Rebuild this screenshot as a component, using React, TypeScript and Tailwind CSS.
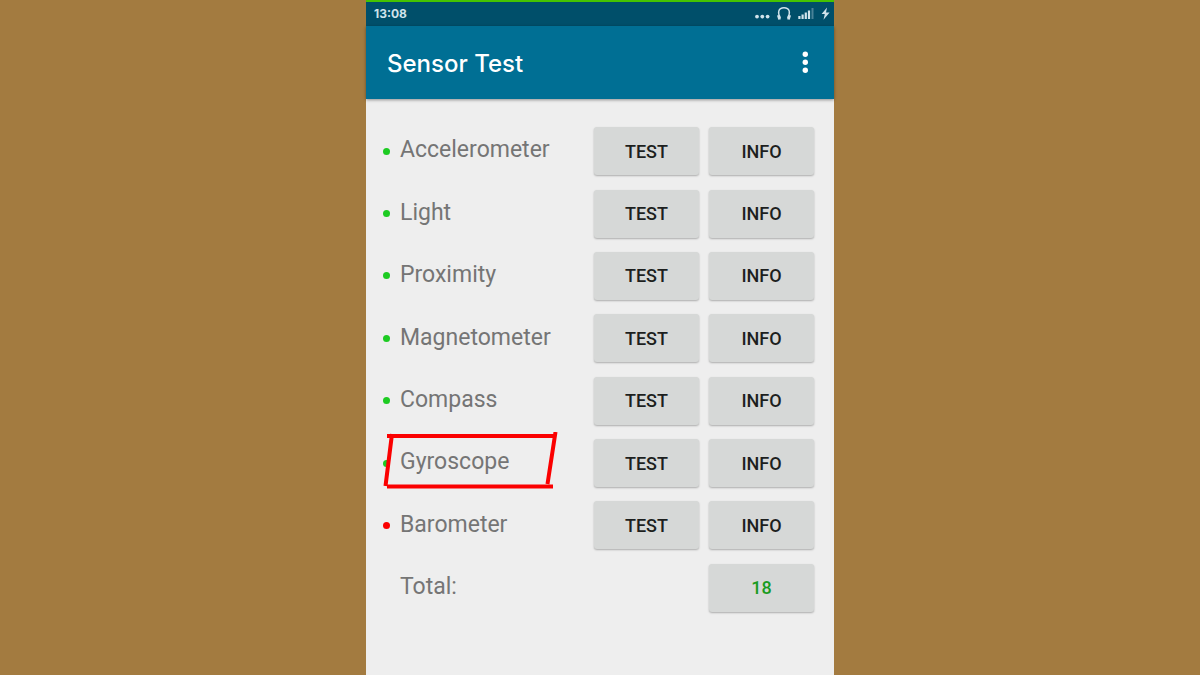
import { memo } from "react";

type Sensor = {
  name: string;
  available: boolean;
  marked?: boolean;
};

const SENSORS: Sensor[] = [
  { name: "Accelerometer", available: true },
  { name: "Light", available: true },
  { name: "Proximity", available: true },
  { name: "Magnetometer", available: true },
  { name: "Compass", available: true },
  { name: "Gyroscope", available: true, marked: true },
  { name: "Barometer", available: false },
];

const BUTTON =
  "h-12 w-[105px] shrink-0 rounded-[3px] bg-[#d6d8d7] pt-px text-lg font-medium shadow-[0_1px_2px_rgba(0,0,0,0.28)]";

function StatusBar() {
  return (
    <div className="flex h-[26px] items-center justify-between border-t-2 border-[#46c300] bg-[#004f6a] pr-1 pl-2 text-[#d0e3eb]">
      <time className="font-['Inter',sans-serif] text-xs leading-6 font-bold">13:08</time>
      <svg width="76" height="16" viewBox="0 0 76 16" fill="currentColor" aria-hidden="true">
        <circle cx="3" cy="10.6" r="1.9" />
        <circle cx="8.3" cy="10.6" r="1.9" />
        <circle cx="13.6" cy="10.6" r="1.9" />
        <path d="M26.4 12C23.2 7 24.2 1.8 30 1.8S36.800 7 33.600 12" fill="none" stroke="currentColor" strokeWidth="1.4" />
        <path d="M23 9.500l2.500-.6 1.400 4.300-2.600.6zM37 9.500l-2.500-.6-1.400 4.300 2.600.6z" />
        <path d="M44.300 10h2.200v3h-2.200zM47.500 8.500h2.200V13h-2.200zM50.700 6.500h2.200V13h-2.200zM53.900 4.500h2.200V13h-2.200z" />
        <path d="M57.500 2H59.500v11H57.500z" opacity=".35" />
        <path d="M73 1.500L67.600 8h3.200L69.500 13.800 75.600 6.600h-3.600z" />
      </svg>
    </div>
  );
}

function AppBar() {
  return (
    <header className="relative flex h-[73px] items-center justify-between bg-[#006f94] pr-[19px] pl-[21px] text-white shadow-[0_1px_3px_rgba(0,0,0,0.4)]">
      <h1 className="pt-0.5 font-['Inter',sans-serif] text-2xl font-medium">Sensor Test</h1>
      <button type="button" aria-label="More options" className="pb-px">
        <svg width="20" height="24" viewBox="0 0 20 24" fill="currentColor" aria-hidden="true">
          <circle cx="10.300" cy="4.300" r="2.700" />
          <circle cx="10.300" cy="12.300" r="2.700" />
          <circle cx="10.300" cy="20.200" r="2.700" />
        </svg>
      </button>
    </header>
  );
}

/** Hand-drawn outline laid over a row's label. */
function Marker() {
  return (
    <svg
      className="pointer-events-none absolute top-0 left-0"
      width="180"
      height="60"
      viewBox="0 0 180 60"
      fill="none"
      stroke="#fb0000"
      strokeWidth="4"
      aria-hidden="true"
    >
      <path d="M4 4H172M4 54.500H170M9 2L2.500 54M172.500 0L164.500 52" />
    </svg>
  );
}

const SensorRow = memo(function SensorRow({ name, available, marked }: Sensor) {
  return (
    <li className="relative flex items-center">
      <span
        role="img"
        aria-label={available ? "Available" : "Missing"}
        className={`h-[7px] w-[7px] rounded-full ${available ? "bg-[#1dcb22]" : "bg-[#fb0000]"}`}
      />
      <span className="grow pb-px pl-[10px] text-[23px] text-[#757575]">{name}</span>
      <div className="flex gap-[10px]">
        <button type="button" aria-label={`Test ${name}`} className={BUTTON}>
          TEST
        </button>
        <button type="button" aria-label={`Info ${name}`} className={BUTTON}>
          INFO
        </button>
      </div>
      {marked && <Marker />}
    </li>
  );
});

export default function App() {
  return (
    <div className="min-h-screen bg-[#a37b40]">
      <div className="mx-auto flex min-h-screen w-full max-w-[468px] flex-col bg-[#eeeeee] font-['Roboto',sans-serif] text-[#1d1f1e]">
        <StatusBar />
        <AppBar />
        <main className="pt-[21px] pr-5 pl-[17px]">
          <ul className="grid min-h-[499px] auto-rows-fr">
            {SENSORS.map((sensor) => (
              <SensorRow key={sensor.name} {...sensor} />
            ))}
            <li className="flex items-center justify-between pl-[17px]">
              <span className="pb-px text-[23px] text-[#757575]">Total:</span>
              <button type="button" aria-label="Total sensors: 18" className={`${BUTTON} text-[#1a9c1f]`}>
                18
              </button>
            </li>
          </ul>
        </main>
      </div>
    </div>
  );
}
